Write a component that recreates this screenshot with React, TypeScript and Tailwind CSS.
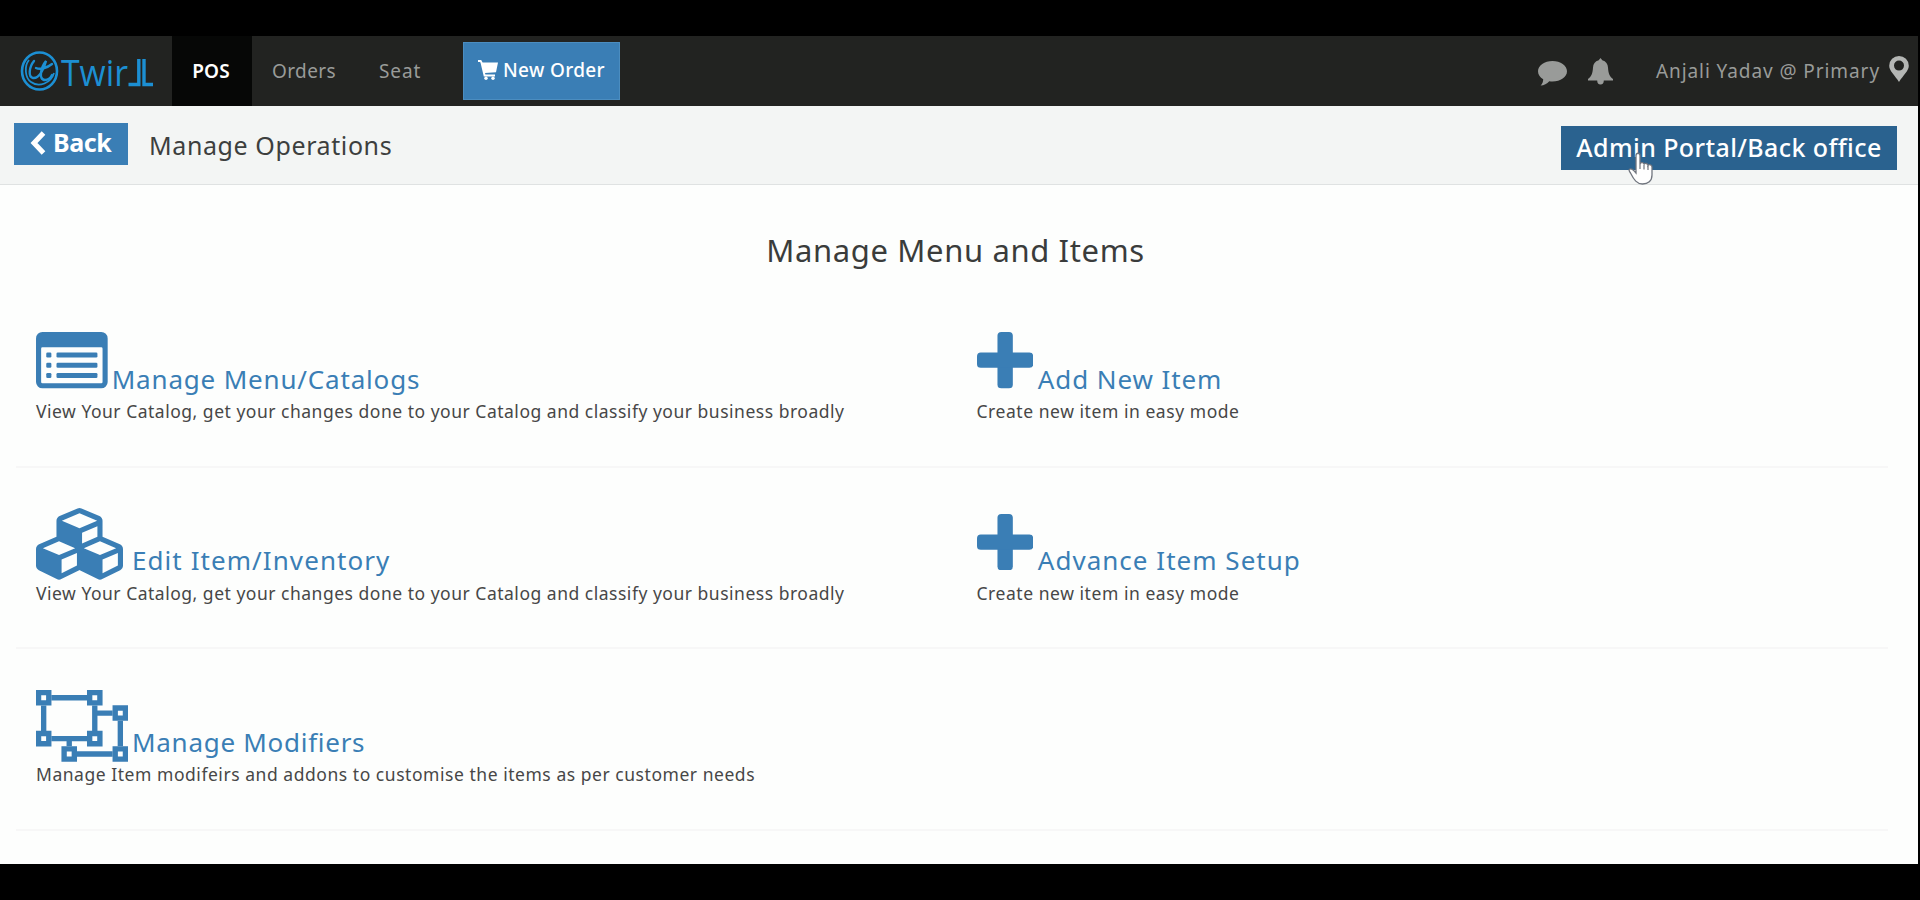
import { ReactNode } from "react";

const ListAltIcon = () => (
    <svg width="71.7" height="56.3" viewBox="0 0 1792 1408" fill="currentColor">
        <path fillRule="evenodd" d="M160 0H1632A160 160 0 0 1 1792 160V1248A160 160 0 0 1 1632 1408H160A160 160 0 0 1 0 1248V160A160 160 0 0 1 160 0ZM160 384A32 32 0 0 0 128 416V1248A32 32 0 0 0 160 1280H1632A32 32 0 0 0 1664 1248V416A32 32 0 0 0 1632 384Z" />
        <rect x="256" y="512" width="128" height="128" rx="32" />
        <rect x="256" y="768" width="128" height="128" rx="32" />
        <rect x="256" y="1024" width="128" height="128" rx="32" />
        <rect x="512" y="512" width="1024" height="128" rx="32" />
        <rect x="512" y="768" width="1024" height="128" rx="32" />
        <rect x="512" y="1024" width="1024" height="128" rx="32" />
    </svg>
);

const PlusIcon = () => (
    <svg width="56.3" height="56.3" viewBox="0 0 1408 1408" fill="currentColor">
        <rect x="512" y="0" width="384" height="1408" rx="96" />
        <rect x="0" y="512" width="1408" height="384" rx="96" />
    </svg>
);

const CubesIcon = () => (
    <svg width="87" height="71.7" viewBox="0 0 2176 1792" fill="currentColor">
        <path d="M640 1632l384-192v-314l-384 164v342zm-64-454l404-173-404-173-404 173zm1088 454l384-192v-314l-384 164v342zm-64-454l404-173-404-173-404 173zm-448-293l384-165v-266l-384 164v267zm-64-379l441-189-441-189-441 189zm1088 518v416q0 36-19 67t-52 47l-448 224q-25 14-57 14t-57-14l-448-224q-4-2-7-4-2 2-7 4l-448 224q-25 14-57 14t-57-14l-448-224q-33-16-52-47t-19-67v-416q0-38 21.5-70t56.5-48l434-186v-400q0-38 21.5-70t56.5-48l448-192q23-10 50-10t50 10l448 192q35 16 56.5 48t21.5 70v400l434 186q36 16 57 48t21 70z" />
    </svg>
);

const UngroupIcon = () => (
    <svg width="92" height="71.7" viewBox="0 0 2304 1792" fill="none" stroke="currentColor" strokeWidth="134">
        <path d="M384 192H1280M384 1216H1280M192 384V1024M1472 384V1024M1536 576H1920M2112 768V1408M1920 1600H1024M832 1408V1280" />
        <path d="M64 64H320V320H64ZM1344 64H1600V320H1344ZM64 1088H320V1344H64ZM1344 1088H1600V1344H1344ZM1984 448H2240V704H1984ZM1984 1472H2240V1728H1984ZM704 1472H960V1728H704Z" />
    </svg>
);

const Logo = () => (
    <svg width="140" height="60" viewBox="0 -8 140 60" fill="none" stroke="#1c8fd3">
        <ellipse cx="19.5" cy="22" rx="17.5" ry="18.5" strokeWidth="2.6" />
        <path d="M9 11C4 17 5 29 11 33C19 39 31 34 34 24" strokeWidth="1.8" />
        <path d="M14 12C9 18 8 28 13 29C19 30 24 20 26 12C21 18 18 31 25 31C29 31 31 28 32 26M16 19C20 21 27 19 32 15" strokeWidth="2.4" strokeLinecap="round" />
        <text x="41" y="36.5" textLength="67" lengthAdjust="spacingAndGlyphs" fontFamily="Open Sans, sans-serif" fontSize="37" fill="#1c8fd3" stroke="none">Twir</text>
        <path d="M108.500 35.500H118.800V10M124 10V35.500H133" strokeWidth="3.4" />
    </svg>
);

const CartIcon = () => (
    <svg width="20" height="20" viewBox="0 0 20 20" fill="currentColor">
        <path d="M0 0H3.200L4.600 2.600H20L18 12.200L7 13L7.400 14.400H17V16.400H5.800L2.600 3L2.100 2H0Z" />
        <circle cx="8" cy="18.200" r="1.700" />
        <circle cx="15" cy="18.200" r="1.700" />
    </svg>
);

const CommentIcon = () => (
    <svg width="29" height="25" viewBox="0 0 29 25" fill="currentColor">
        <path d="M14.500 0C22.500 0 29 4.400 29 10.300S22.500 20.600 14.500 20.600C13.400 20.600 12.300 20.500 11.300 20.300C9 23 6 24.300 2.600 24.600C4.300 22.800 5.200 21 5.200 18.300C2 16.400 0 13.600 0 10.300C0 4.400 6.500 0 14.500 0Z" />
    </svg>
);

const BellIcon = () => (
    <svg width="25" height="27" viewBox="0 0 25 27" fill="currentColor">
        <path d="M12.500 0L14.300 2.200C18 3.200 19.800 6 20 9.500C20.300 15 21.500 18.500 25 21V22.500H15.800A3.300 4 0 0 1 9.200 22.500H0V21C3.500 18.500 4.700 15 5 9.500C5.200 6 7 3.200 10.700 2.200Z" />
    </svg>
);

const MarkerIcon = () => (
    <svg width="20" height="26" viewBox="0 0 20 26" fill="currentColor">
        <path fillRule="evenodd" d="M10 0A9.800 9.800 0 0 1 19.800 9.800C19.800 15 14 19.500 10 26C6 19.500 .2 15 .2 9.800A9.800 9.800 0 0 1 10 0ZM10 4.600A5 5 0 1 0 10 14.600A5 5 0 1 0 10 4.600Z" />
    </svg>
);

const HandCursor = () => (
    <svg className="absolute left-[66px] top-[26px]" width="28" height="34" viewBox="0 0 28 34">
        <path d="M9 3.500C9 .5 13 .5 13 3.500V12C13.500 10 17 10.200 17 12.500C17.800 10.800 21 11.200 21 13.500C22 12 25 12.600 25 15V23C25 29 21 32 15.500 32C10 32 7 28 3.500 21C2 19 1.500 17.500 3 17C5 16.500 7 18.500 9 21Z" fill="#fff" stroke="#70757e" strokeWidth="1.300" />
        <path d="M13 12V17M17 13V17.500M21 14V18" stroke="#70757e" strokeWidth="1.200" />
    </svg>
);

interface OperationProps {
    icon: ReactNode;
    title: string;
    titleClass: string;
    text: string;
    textClass: string;
}

const Operation = ({ icon, title, titleClass, text, textClass }: OperationProps) => (
    <div>
        <a href="#" className="flex h-14 items-end text-[#3a7eb5]">
            {icon}
            <span className={`text-[26px] leading-5 whitespace-nowrap ${titleClass}`}>{title}</span>
        </a>
        <p className={`mt-[10.5px] text-[17.5px] leading-6 whitespace-nowrap text-[#474747] ${textClass}`}>{text}</p>
    </div>
);

const Row = ({ children }: { children: ReactNode }) => (
    <div className="grid h-[181.5px] grid-cols-[940.5px_1fr] border-b-2 border-[#f7f7f7] pt-[46.5px] pl-5">
        {children}
    </div>
);

export default function App() {
    return (
        <div className="h-[900px] w-[1920px] overflow-hidden bg-black pt-9 pr-[2px] font-['Noto_Sans',sans-serif]">
            <div className="h-[828px] bg-[#fdfefd]">
                {/* Top navigation */}
                <nav className="flex h-[70px] items-center bg-[#222321] text-[19px] text-[#999b99]">
                    <div className="w-[172px] pl-5">
                        <Logo />
                    </div>
                    <a href="#" className="flex h-full w-20 items-center justify-center bg-[#060706] pr-[2px] font-semibold tracking-[0.2px] text-white">POS</a>
                    <a href="#" className="ml-5 w-[106px] tracking-[0.4px]">Orders</a>
                    <a href="#" className="ml-px w-[84px] tracking-[0.9px]">Seat</a>
                    <a href="#" className="flex h-[58px] w-[157px] items-center border border-[#4b8dc0] bg-[#3a7eb5] pb-[2px] pl-[14px] font-medium tracking-[0.35px] whitespace-nowrap text-white">
                        <CartIcon />
                        <span className="ml-[5px]">New Order</span>
                    </a>
                    <div className="ml-auto flex items-center">
                        <div className="mr-[21px] pt-1">
                            <CommentIcon />
                        </div>
                        <BellIcon />
                        <span className="ml-[43px] tracking-[0.92px] whitespace-nowrap">Anjali Yadav @ Primary</span>
                        <div className="mr-[9px] ml-[9px] pb-[5px] text-[#b4b6b4]">
                            <MarkerIcon />
                        </div>
                    </div>
                </nav>

                {/* Page header */}
                <div className="flex h-[79px] items-start border-b border-[#dfe2e2] bg-[#f3f5f4] pl-[14px]">
                    <a href="#" className="mt-[17px] flex h-[42px] w-[114px] items-center bg-[#3a7eb5] pb-[2px] pl-4 text-[25px] font-bold tracking-[-0.4px] text-white">
                        <svg width="16" height="24" viewBox="0 0 16 24" fill="none" stroke="currentColor" strokeWidth="5">
                            <path d="M13.500 2L4 12L13.500 22" />
                        </svg>
                        <span className="ml-[7px]">Back</span>
                    </a>
                    <h1 className="mt-[19px] ml-[21px] text-[25px] leading-10 tracking-[0.6px] text-[#3d3f3e]">Manage Operations</h1>
                    <div className="relative mt-5 mr-[21px] ml-auto">
                        <a href="#" className="flex h-11 w-[336px] items-center justify-center text-[25px] font-medium tracking-[0.4px] whitespace-nowrap text-white bg-[#2a628f]">Admin Portal/Back office</a>
                        <HandCursor />
                    </div>
                </div>

                <h2 className="flex h-[101px] items-center justify-center pt-[29px] pr-[7px] text-[31px] tracking-[0.63px] text-[#3a3c3b]">Manage Menu and Items</h2>

                {/* Operations */}
                <div className="mr-[30px] ml-4">
                    <Row>
                        <Operation
                            icon={<ListAltIcon />}
                            title="Manage Menu/Catalogs"
                            titleClass="ml-1 tracking-[0.82px]"
                            text="View Your Catalog, get your changes done to your Catalog and classify your business broadly"
                            textClass="tracking-[0.51px]"
                        />
                        <Operation
                            icon={<PlusIcon />}
                            title="Add New Item"
                            titleClass="ml-[5px] tracking-[0.9px]"
                            text="Create new item in easy mode"
                            textClass="tracking-[0.55px]"
                        />
                    </Row>
                    <Row>
                        <Operation
                            icon={<div className="-mb-[10px]"><CubesIcon /></div>}
                            title="Edit Item/Inventory"
                            titleClass="ml-[9px] tracking-[1.07px]"
                            text="View Your Catalog, get your changes done to your Catalog and classify your business broadly"
                            textClass="tracking-[0.51px]"
                        />
                        <Operation
                            icon={<PlusIcon />}
                            title="Advance Item Setup"
                            titleClass="ml-[5px] tracking-[1.02px]"
                            text="Create new item in easy mode"
                            textClass="tracking-[0.55px]"
                        />
                    </Row>
                    <Row>
                        <Operation
                            icon={<div className="-mb-[10px]"><UngroupIcon /></div>}
                            title="Manage Modifiers"
                            titleClass="ml-1 tracking-[0.72px]"
                            text="Manage Item modifeirs and addons to customise the items as per customer needs"
                            textClass="tracking-[0.54px]"
                        />
                    </Row>
                </div>
            </div>
        </div>
    );
}
